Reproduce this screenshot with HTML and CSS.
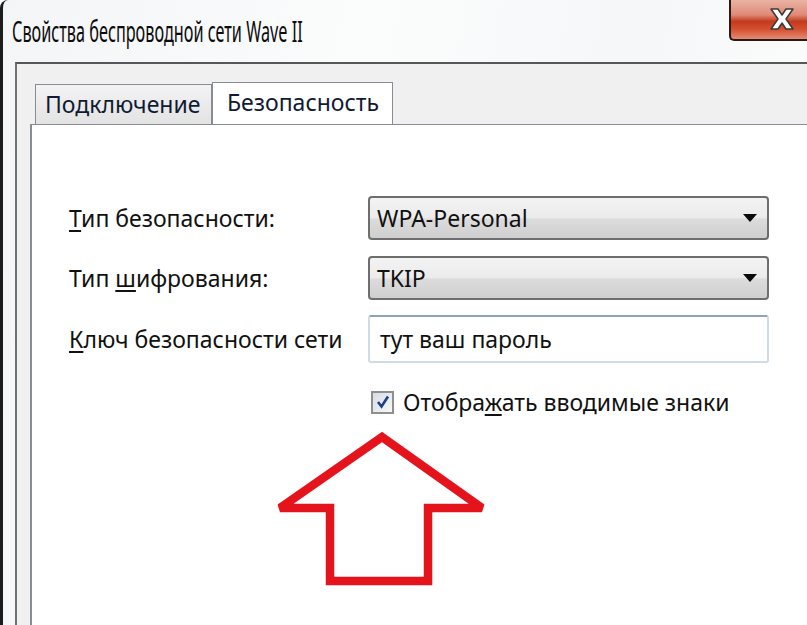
FILE: index.html
```html
<!DOCTYPE html>
<html lang="ru">
<head>
    <meta charset="UTF-8">
    <title>Свойства беспроводной сети Wave II</title>
    <link rel="stylesheet" href="styles.css">
</head>
<body>
    <div class="window">
        <div class="titlebar">
            <span class="title">Свойства беспроводной сети Wave II</span>
            <div class="close-btn">
                <svg width="26" height="24" viewBox="0 0 26 24">
                    <path d="M2 2 L9 2 L13 8 L17 2 L24 2 L17 12 L24 22 L17 22 L13 16 L9 22 L2 22 L9 12 Z"
                          fill="#ffffff" stroke="#3a3a3a" stroke-width="1.5" stroke-linejoin="round"/>
                </svg>
            </div>
        </div>
        <div class="dialog">
            <div class="tabs">
                <div class="tab">Подключение</div>
                <div class="tab active">Безопасность</div>
            </div>
            <div class="panel">
                <div class="form">
                    <label class="label"><u>Т</u>ип безопасности:</label>
                    <div class="select">
                        <span>WPA-Personal</span>
                        <span class="arrow"></span>
                    </div>

                    <label class="label">Тип <u>ш</u>ифрования:</label>
                    <div class="select">
                        <span>TKIP</span>
                        <span class="arrow"></span>
                    </div>

                    <label class="label"><u>К</u>люч безопасности сети</label>
                    <div class="input">тут ваш пароль</div>

                    <div></div>
                    <div class="check-row">
                        <span class="checkbox">
                            <svg width="14" height="14" viewBox="0 0 14 14">
                                <path d="M2 7 L5.5 11.5 L12 1.5" fill="none" stroke="#1f3f86" stroke-width="2.6"/>
                            </svg>
                        </span>
                        <span>Отобра<u>ж</u>ать вводимые знаки</span>
                    </div>
                </div>

                <svg class="big-arrow" width="220" height="160" viewBox="0 0 220 160">
                    <path d="M105 5 L3 76 L53 76 L53 149 L151 149 L151 76 L205 76 Z"
                          fill="none" stroke="#e5141c" stroke-width="8.5"
                          stroke-linejoin="miter" stroke-miterlimit="2.5"/>
                </svg>
            </div>
        </div>
    </div>
</body>
</html>
```

FILE: styles.css
```css
body {
    margin: 0;
    padding: 0;
    background: #ffffff;
    font-family: 'Noto Sans', 'DejaVu Sans', sans-serif;
    color: #111111;
    overflow: hidden;
}
.window {
    width: 804px;
    height: 625px;
    border-left: 3px solid #1c1c1c;
    border-top-left-radius: 8px;
    background: linear-gradient(100deg, #f3f5f7 0%, #fbfcfc 40%, #f6f7f8 70%, #fdfdfd 100%);
    display: flex;
    flex-direction: column;
}
.titlebar {
    height: 62px;
    display: flex;
    justify-content: space-between;
    align-items: flex-start;
}
.title {
    margin-top: 11px;
    margin-left: 9px;
    font-size: 29px;
    color: #0c0c0c;
    white-space: nowrap;
    display: inline-block;
    transform: scaleX(0.56);
    transform-origin: left center;
}
.close-btn {
    width: 78px;
    height: 41px;
    border-left: 2px solid #2a1a16;
    border-bottom: 2px solid #2a1a16;
    border-bottom-left-radius: 5px;
    background: linear-gradient(#eab3a4 0%, #df8a76 38%, #c43a1e 55%, #d4502f 75%, #e68a74 100%);
    display: flex;
    align-items: center;
    padding-left: 38px;
    box-sizing: border-box;
}
.close-btn svg {
    margin-top: -1px;
}
.dialog {
    flex: 1;
    margin-left: 12px;
    border-left: 2px solid #6f7074;
    border-top: 2px solid #56575a;
    background: #f0f0f0;
    padding-left: 13px;
    display: flex;
    flex-direction: column;
}
.tabs {
    height: 60px;
    display: flex;
    align-items: flex-end;
    padding-left: 5px;
}
.tab {
    height: 40px;
    box-sizing: border-box;
    width: 177px;
    border: 1px solid #898c95;
    border-bottom: none;
    background: linear-gradient(#f3f3f3, #e3e3e3);
    font-size: 23px;
    color: #111a33;
    padding-left: 9px;
    line-height: 38px;
    white-space: nowrap;
}
.tab.active {
    width: 181px;
    height: 43px;
    margin-bottom: -1px;
    background: #ffffff;
    padding-left: 14px;
    line-height: 38px;
    position: relative;
}
.panel {
    flex: 1;
    background: #ffffff;
    border-left: 2px solid #898c95;
    border-top: 1px solid #898c95;
    padding-top: 71px;
    padding-left: 37px;
    position: relative;
}
.form {
    display: grid;
    grid-template-columns: 299px 401px;
    grid-template-rows: 44px 43px 48px;
    row-gap: 16px;
    align-items: center;
    font-size: 23px;
}
.label u {
    text-decoration-thickness: 2px;
    text-underline-offset: 3px;
}
.select {
    height: 44px;
    box-sizing: border-box;
    border: 2px solid #6e6e6e;
    border-radius: 4px;
    background: linear-gradient(#f3f3f3 0%, #ebebeb 50%, #dcdcdc 52%, #cfcfcf 100%);
    display: flex;
    align-items: center;
    justify-content: space-between;
    padding-left: 7px;
    padding-right: 10px;
}
.arrow {
    width: 0;
    height: 0;
    border-left: 7px solid transparent;
    border-right: 7px solid transparent;
    border-top: 8px solid #0b0b0b;
}
.input {
    height: 48px;
    box-sizing: border-box;
    border: 2px solid #cfdbe6;
    border-top-color: #8ea3b7;
    border-radius: 3px;
    background: #ffffff;
    padding-left: 10px;
    display: flex;
    align-items: center;
}
.check-row {
    display: flex;
    align-items: center;
    gap: 9px;
    padding-left: 3px;
    margin-top: 7px;
}
.check-row u {
    text-decoration-thickness: 2px;
    text-underline-offset: 3px;
}
.checkbox {
    width: 23px;
    height: 23px;
    box-sizing: border-box;
    border: 2px solid #8f8f8f;
    background: linear-gradient(135deg, #d7dde6, #f6f7f9);
    display: flex;
    align-items: center;
    justify-content: center;
}
.big-arrow {
    position: absolute;
    left: 245px;
    top: 307px;
}
```
